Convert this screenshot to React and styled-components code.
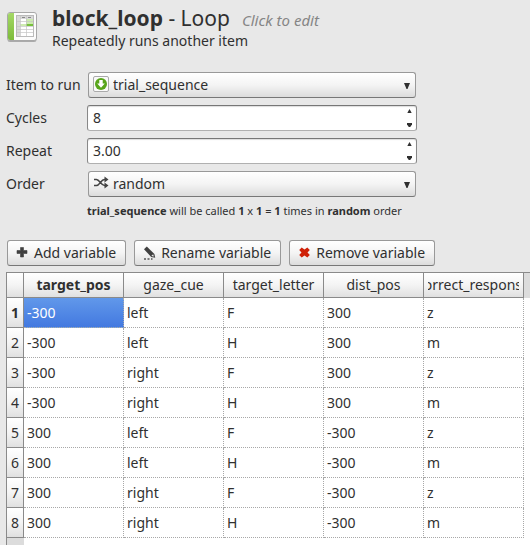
import React, { useState } from "react";
import styled, { createGlobalStyle } from "styled-components";

const GlobalStyle = createGlobalStyle`
  * { box-sizing: border-box; }
  body {
    margin: 0;
    background: #e8e8e8;
    color: #303030;
    font-family: "Noto Sans", "Open Sans", sans-serif;
    font-size: 14px;
    line-height: 20px;
  }
  button, input, select { font: inherit; color: inherit; margin: 0; }
`;

const Page = styled.main`
  display: flex;
  flex-direction: column;
  min-height: 100vh;
  padding-left: 6px;
  overflow: hidden;
`;

const Header = styled.header`
  display: flex;
  align-items: center;
  gap: 14px;
  padding-top: 6px;
  height: 48px;
`;

const TitleLine = styled.div`
  display: flex;
  align-items: baseline;
  gap: 12px;
  line-height: 26px;
  white-space: nowrap;
`;

const Title = styled.h1`
  margin: 0;
  font-size: 21px;
  font-weight: 400;
`;

const EditHint = styled.em`
  color: #858585;
  font-size: 15px;
`;

const Subtitle = styled.p`
  margin: 0;
  line-height: 16px;
`;

const Form = styled.form`
  display: grid;
  grid-template-columns: 81px minmax(0, 330px);
  align-items: center;
  row-gap: 7px;
  margin-top: 24px;
`;

const Control = styled.div`
  position: relative;
  display: flex;
  height: 26px;
  padding: ${(p) => (p.$inset ? "0 1px" : "0")};
`;

const Select = styled.select`
  appearance: none;
  flex: 1;
  min-width: 0;
  padding: 0 24px 0 24px;
  border: 1px solid #999;
  border-bottom-color: #777;
  border-radius: 3px;
  background: linear-gradient(#fff, #f4f4f4 50%, #dcdcdc);
`;

const LeadIcon = styled.span`
  position: absolute;
  left: 6px;
  top: 4px;
  display: flex;
  pointer-events: none;
`;

const DropArrow = styled.svg`
  position: absolute;
  right: 7px;
  top: 11px;
  pointer-events: none;
`;

const NumberInput = styled.input`
  appearance: textfield;
  flex: 1;
  min-width: 0;
  padding: 0 20px 0 5px;
  border: 1px solid #b0b0b0;
  border-top-color: #777;
  border-left-color: #888;
  border-right-color: #888;
  border-radius: 3px;
  background: #fff;
  box-shadow: inset 0 1px 1px #ddd;
  &::-webkit-inner-spin-button { appearance: none; margin: 0; }
`;

const Stepper = styled.div`
  position: absolute;
  right: 2px;
  top: 2px;
  bottom: 2px;
  width: 12px;
  display: flex;
  flex-direction: column;
`;

const StepButton = styled.button`
  flex: 1;
  display: flex;
  align-items: ${(p) => (p.$up ? "flex-start" : "flex-end")};
  justify-content: center;
  padding: 2px 0;
  border: 0;
  background: none;
`;

const Summary = styled.p`
  grid-column: 2;
  margin: 0;
  font-size: 11px;
  line-height: 14px;
  white-space: nowrap;
`;

const Toolbar = styled.div`
  display: flex;
  gap: 8px;
  padding: 0 1px;
  margin: 22px 0 6px;
`;

const ToolButton = styled.button`
  display: flex;
  align-items: center;
  gap: 5px;
  height: 26px;
  padding: 0 9px 0 8px;
  border: 1px solid #999;
  border-bottom-color: #777;
  border-radius: 3px;
  background: linear-gradient(#fff, #f4f4f4 50%, #dcdcdc);
  white-space: nowrap;
`;

const TablePane = styled.div`
  flex: 1;
  display: flex;
  border-top: 1px solid #8a8a8a;
  border-left: 1px solid #8a8a8a;
  background:
    linear-gradient(#dcdcdc, #dcdcdc) 0 0 / 100% 25px no-repeat,
    linear-gradient(#dcdcdc, #dcdcdc) 0 0 / 17px 100% no-repeat,
    #fff;
`;

const Table = styled.table`
  table-layout: fixed;
  width: 517px;
  border-collapse: separate;
  border-spacing: 0;
  align-self: flex-start;
`;

const Column = styled.col`
  width: ${(p) => (p.$index ? "17px" : "100px")};
`;

const HeadCell = styled.th`
  height: 25px;
  padding: 0 4px;
  border-right: 1px solid #8a8a8a;
  border-bottom: 1px solid #8a8a8a;
  background: linear-gradient(#fff, #f4f4f4 50%, #e0e0e0);
  font-weight: ${(p) => (p.$current ? 700 : 400)};
`;

const HeadLabel = styled.span`
  display: flex;
  justify-content: center;
  overflow: hidden;
`;

const RowHead = styled.th`
  height: 30px;
  padding: 0;
  border-right: 1px solid #8a8a8a;
  border-bottom: 1px solid #8a8a8a;
  background: linear-gradient(#fff, #f4f4f4 50%, #e0e0e0);
  font-weight: ${(p) => (p.$current ? 700 : 400)};
`;

const Cell = styled.td`
  height: 30px;
  padding: 0 3px;
  border-right: 1px dotted #a8a8a8;
  border-bottom: 1px dotted #a8a8a8;
  background: ${(p) => (p.$selected ? "linear-gradient(#6198ea, #4379e0)" : "#fff")};
  color: ${(p) => (p.$selected ? "#fff" : "inherit")};
`;

const LoopIcon = () => (
  <svg width="32" height="32" viewBox="0 0 32 32" aria-hidden="true">
    <defs>
      <linearGradient id="spine" x1="0" y1="0" x2="0" y2="1">
        <stop offset="0" stopColor="#a5d867" />
        <stop offset="1" stopColor="#7cbb3a" />
      </linearGradient>
    </defs>
    <rect x="1.5" y="2.5" width="29" height="28.5" rx="2.5" fill="#aaa" />
    <rect x="1.5" y="1.5" width="29" height="28" rx="2.5" fill="#fcfcfc" stroke="#a8a8a8" />
    <path d="M4 2h4v27H4a2 2 0 0 1-2-2V4a2 2 0 0 1 2-2z" fill="url(#spine)" />
    <rect x="10.5" y="4.5" width="17" height="21" fill="#fff" stroke="#bbb" />
    <path d="M11 5h16v3H11zM11 8h3v17h-3z" fill="#d8d8d8" />
    <path d="M20 8h7v5h-7z" fill="#cdebb0" />
    <path d="M14 13h6v2h-6z" fill="#cdebb0" />
    <path d="M20 13h7v2h-7z" fill="#78c13c" />
    <path d="M11 10.5h16M11 15.5h16M11 18.5h16M11 21.5h16M14.5 5v20M20.5 5v20" stroke="#c4c4c4" strokeWidth=".7" />
    <path d="M16 6.5h3M22 6.5h3" stroke="#888" />
  </svg>
);

const SequenceIcon = () => (
  <svg width="16" height="16" viewBox="0 0 16 16" aria-hidden="true">
    <rect x=".5" y=".5" width="15" height="15" rx="1.5" fill="#fafafa" stroke="#aaa" />
    <circle cx="8" cy="8" r="6" fill="#58a51b" />
    <path d="M6.3 4h3.4v3.5h2.1L8 11.8 4.2 7.5h2.1z" fill="#fff" />
  </svg>
);

const ShuffleIcon = () => (
  <svg width="16" height="16" viewBox="0 0 16 16" aria-hidden="true" fill="none" stroke="#444" strokeWidth="1.5">
    <path d="M1 4.5h2.500c3 0 4.500 6 8 6h1M1 10.500h2.500c3 0 4.500-6 8-6h1" />
    <path d="M11.500 1.500 15.500 4.500l-4 3zM11.500 7.500l4 3-4 3z" fill="#444" stroke="none" />
  </svg>
);

const PlusIcon = () => (
  <svg width="13" height="14" viewBox="0 0 13 14" aria-hidden="true">
    <path d="M4.5 1.5h3v3H11v3H7.5V11h-3V7.5H1v-3h3.5z" fill="#404040" stroke="#404040" strokeWidth=".6" strokeLinejoin="round" />
  </svg>
);

const PencilIcon = () => (
  <svg width="13" height="15" viewBox="0 0 13 15" aria-hidden="true">
    <path d="M1 3.2 3.8.6 11.4 8l.8 3.8-4-.8z" fill="#404040" />
    <path d="m8.3 9.9 1.8-1.7.8 2.4z" fill="#eee" />
    <path d="M1 13h2M4.5 13h2M8 13h1.5" stroke="#555" strokeWidth="1.6" />
  </svg>
);

const CrossIcon = () => (
  <svg width="13" height="14" viewBox="0 0 13 14" aria-hidden="true">
    <path d="M1.2 4 3.7 1.5l2.8 2 2.8-2L11.8 4 9.5 6.5l2.3 2.5-2.5 2.5-2.8-2-2.8 2L1.2 9l2.3-2.5z" fill="#cf2108" />
  </svg>
);

const Arrow = ({ up }) => (
  <svg width="5" height="4" viewBox="0 0 5 4" aria-hidden="true">
    <path d={up ? "M2.5 0 4.7 4H.3z" : "M0 0h5v1.5L3.2 4H1.8L0 1.5z"} fill="#303030" />
  </svg>
);

const Dropdown = ({ id, label, icon, options }) => (
  <>
    <label htmlFor={id}>{label}</label>
    <Control $inset>
      <Select id={id}>
        {options.map((o) => <option key={o}>{o}</option>)}
      </Select>
      <LeadIcon>{icon}</LeadIcon>
      <DropArrow width="6" height="6" viewBox="0 0 6 6" aria-hidden="true">
        <path d="M0 0h6L3.5 6h-1z" fill="#303030" />
      </DropArrow>
    </Control>
  </>
);

const SpinBox = ({ id, label, initial, digits }) => {
  const [value, setValue] = useState(initial);
  const step = (d) => setValue((v) => Math.max(0, Number(v) + d).toFixed(digits));
  return (
    <>
      <label htmlFor={id}>{label}</label>
      <Control>
        <NumberInput id={id} type="number" step="any" value={value} onChange={(e) => setValue(e.target.value)} />
        <Stepper>
          <StepButton type="button" $up aria-label={`Increase ${label}`} onClick={() => step(1)}><Arrow up /></StepButton>
          <StepButton type="button" aria-label={`Decrease ${label}`} onClick={() => step(-1)}><Arrow /></StepButton>
        </Stepper>
      </Control>
    </>
  );
};

const columns = ["target_pos", "gaze_cue", "target_letter", "dist_pos", "correct_response"];
const rows = [
  ["-300", "left", "F", "300", "z"],
  ["-300", "left", "H", "300", "m"],
  ["-300", "right", "F", "300", "z"],
  ["-300", "right", "H", "300", "m"],
  ["300", "left", "F", "-300", "z"],
  ["300", "left", "H", "-300", "m"],
  ["300", "right", "F", "-300", "z"],
  ["300", "right", "H", "-300", "m"],
];

export default function App() {
  const [selected, setSelected] = useState([0, 0]);
  return (
    <Page>
      <GlobalStyle />
      <Header>
        <LoopIcon />
        <div>
          <TitleLine>
            <Title><b>block_loop</b> - Loop</Title>
            <EditHint>Click to edit</EditHint>
          </TitleLine>
          <Subtitle>Repeatedly runs another item</Subtitle>
        </div>
      </Header>
      <Form>
        <Dropdown id="item" label="Item to run" icon={<SequenceIcon />} options={["trial_sequence"]} />
        <SpinBox id="cycles" label="Cycles" initial="8" digits={0} />
        <SpinBox id="repeat" label="Repeat" initial="3.00" digits={2} />
        <Dropdown id="order" label="Order" icon={<ShuffleIcon />} options={["random"]} />
        <Summary>
          <b>trial_sequence</b> will be called <b>1</b> x <b>1</b> = <b>1</b> times in <b>random</b> order
        </Summary>
      </Form>
      <Toolbar>
        <ToolButton type="button"><PlusIcon />Add variable</ToolButton>
        <ToolButton type="button"><PencilIcon />Rename variable</ToolButton>
        <ToolButton type="button"><CrossIcon />Remove variable</ToolButton>
      </Toolbar>
      <TablePane>
        <Table>
          <colgroup>
            <Column $index />
            {columns.map((c) => <Column key={c} />)}
          </colgroup>
          <thead>
            <tr>
              <HeadCell as="td" />
              {columns.map((c, i) => (
                <HeadCell key={c} scope="col" $current={i === selected[1]}><HeadLabel>{c}</HeadLabel></HeadCell>
              ))}
            </tr>
          </thead>
          <tbody>
            {rows.map((row, r) => (
              <tr key={r}>
                <RowHead scope="row" $current={r === selected[0]}>{r + 1}</RowHead>
                {row.map((v, c) => (
                  <Cell key={c} $selected={r === selected[0] && c === selected[1]} onClick={() => setSelected([r, c])}>{v}</Cell>
                ))}
              </tr>
            ))}
          </tbody>
        </Table>
      </TablePane>
    </Page>
  );
}
